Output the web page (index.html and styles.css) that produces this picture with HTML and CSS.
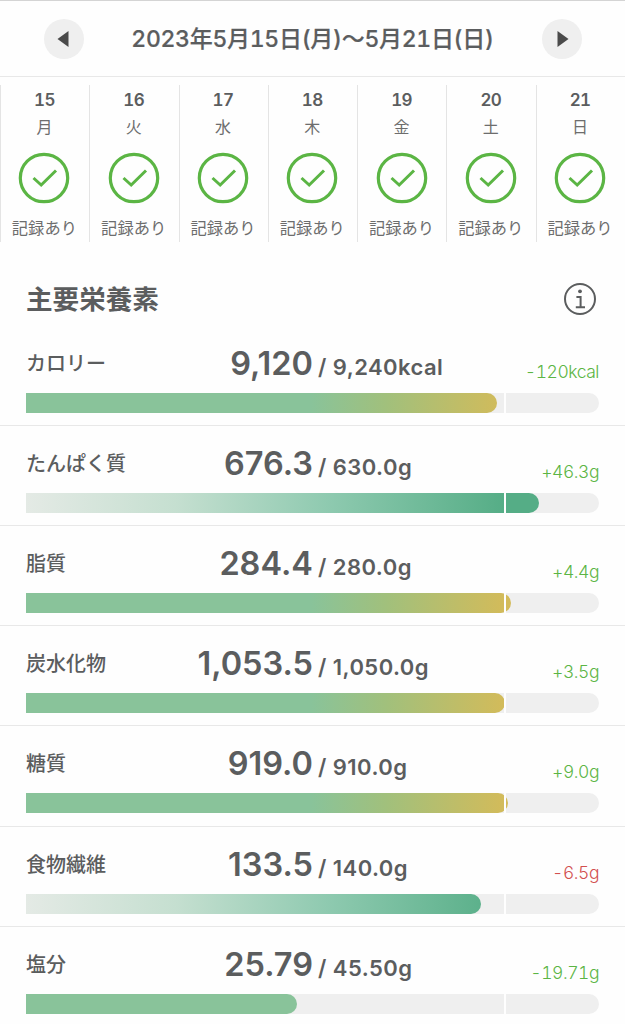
FILE: index.html
```
<!DOCTYPE html>
<html lang="ja">
<head>
    <title>主要栄養素</title>
    <meta charset="UTF-8">
    <link rel="stylesheet" href="styles.css">
</head>
<body>
    <svg width="0" height="0" class="defs">
        <symbol id="check" viewBox="0 0 52 52">
            <circle cx="26" cy="26" r="23.7" stroke-width="3.2"/>
            <path d="M15.5 26 L23.2 33 L38 18.5" stroke-width="3"/>
        </symbol>
    </svg>

    <div class="week-nav">
        <button class="nav-btn"><svg width="12" height="18" viewBox="0 0 12 18"><path d="M0.5 9 L11.5 1 V17 Z"/></svg></button>
        <h1>2023年5月15日(月)〜5月21日(日)</h1>
        <button class="nav-btn next"><svg width="12" height="18" viewBox="0 0 12 18"><path d="M11.5 9 L0.5 1 V17 Z"/></svg></button>
    </div>

    <div class="days">
        <div class="day"><b>15</b><span>月</span><svg class="check"><use href="#check"/></svg><small>記録あり</small></div>
        <div class="day"><b>16</b><span>火</span><svg class="check"><use href="#check"/></svg><small>記録あり</small></div>
        <div class="day"><b>17</b><span>水</span><svg class="check"><use href="#check"/></svg><small>記録あり</small></div>
        <div class="day"><b>18</b><span>木</span><svg class="check"><use href="#check"/></svg><small>記録あり</small></div>
        <div class="day"><b>19</b><span>金</span><svg class="check"><use href="#check"/></svg><small>記録あり</small></div>
        <div class="day"><b>20</b><span>土</span><svg class="check"><use href="#check"/></svg><small>記録あり</small></div>
        <div class="day"><b>21</b><span>日</span><svg class="check"><use href="#check"/></svg><small>記録あり</small></div>
    </div>

    <div class="section-header">
        <h2>主要栄養素</h2>
        <svg class="info" width="34" height="34" viewBox="0 0 34 34">
            <circle cx="17" cy="17" r="15" />
            <path d="M13.4 15 H17.6 V25.3 M12.8 25.3 H22" />
            <circle class="dot" cx="17" cy="9.3" r="1.9" />
        </svg>
    </div>

    <div class="nutrient">
        <div class="figures">
            <div class="name">カロリー</div>
            <div class="value">9,120</div>
            <div class="goal">/ 9,240kcal</div>
            <div class="diff">-120kcal</div>
        </div>
        <div class="track"><div class="fill limit" style="width: 471px"></div></div>
    </div>
    <div class="nutrient">
        <div class="figures">
            <div class="name">たんぱく質</div>
            <div class="value">676.3</div>
            <div class="goal">/ 630.0g</div>
            <div class="diff">+46.3g</div>
        </div>
        <div class="track"><div class="fill target" style="width: 512.5px"></div></div>
    </div>
    <div class="nutrient">
        <div class="figures">
            <div class="name">脂質</div>
            <div class="value">284.4</div>
            <div class="goal">/ 280.0g</div>
            <div class="diff">+4.4g</div>
        </div>
        <div class="track"><div class="fill limit" style="width: 485px"></div></div>
    </div>
    <div class="nutrient">
        <div class="figures">
            <div class="name">炭水化物</div>
            <div class="value">1,053.5</div>
            <div class="goal">/ 1,050.0g</div>
            <div class="diff">+3.5g</div>
        </div>
        <div class="track"><div class="fill limit" style="width: 479px"></div></div>
    </div>
    <div class="nutrient">
        <div class="figures">
            <div class="name">糖質</div>
            <div class="value">919.0</div>
            <div class="goal">/ 910.0g</div>
            <div class="diff">+9.0g</div>
        </div>
        <div class="track"><div class="fill limit" style="width: 482px"></div></div>
    </div>
    <div class="nutrient">
        <div class="figures">
            <div class="name">食物繊維</div>
            <div class="value">133.5</div>
            <div class="goal">/ 140.0g</div>
            <div class="diff short">-6.5g</div>
        </div>
        <div class="track"><div class="fill target" style="width: 455px"></div></div>
    </div>
    <div class="nutrient">
        <div class="figures">
            <div class="name">塩分</div>
            <div class="value">25.79</div>
            <div class="goal">/ 45.50g</div>
            <div class="diff">-19.71g</div>
        </div>
        <div class="track"><div class="fill limit" style="width: 270.5px"></div></div>
    </div>
</body>
</html>
```
FILE: styles.css
```
:root {
    --text: #5b5d5e;
    --line: #e8e8e8;
    --green: #5bb544;
    --red: #d2504f;
}

* {
    margin: 0;
    padding: 0;
    box-sizing: border-box;
}

body {
    background: #fefefe;
    color: var(--text);
    font-family: Inter, "Noto Sans CJK JP", sans-serif;
    height: 1024px;
    overflow: hidden;
}

.defs {
    display: block;
}

.week-nav {
    height: 77px;
    padding: 0 43.5px;
    border-top: 1px solid #d4d4d4;
    border-bottom: 1px solid var(--line);
    display: flex;
    justify-content: space-between;
    align-items: center;
}

.week-nav h1 {
    font-size: 23px;
    font-weight: 500;
    line-height: 30px;
    font-variant-numeric: tabular-nums;
    letter-spacing: -0.3px;
    white-space: nowrap;
    -webkit-text-stroke: 0.2px var(--text);
}

.nav-btn {
    width: 40px;
    height: 40px;
    border: none;
    border-radius: 50%;
    background: #efefef;
    display: flex;
    align-items: center;
    justify-content: center;
    padding-right: 2px;
}

.nav-btn.next {
    padding: 0 0 0 3px;
}

.nav-btn path {
    fill: #4a4a4a;
}

.days {
    margin-top: 8px;
    height: 157px;
    display: grid;
    grid-template-columns: repeat(7, 1fr);
}

.day {
    border-left: 1px solid #e4e4e4;
    padding-right: 1.5px;
    display: flex;
    flex-direction: column;
    align-items: center;
    white-space: nowrap;
}

.day b {
    font-size: 17px;
    font-weight: 600;
    line-height: 20px;
    margin-top: 5px;
    font-variant-numeric: tabular-nums;
    letter-spacing: -0.6px;
}

.day span {
    font-size: 16px;
    line-height: 20px;
    margin-top: 7px;
    color: #6d6d6d;
}

.day small {
    font-size: 16.3px;
    line-height: 20px;
    margin-top: 14px;
    color: #6d6d6d;
}

.check {
    width: 52px;
    height: 52px;
    margin-top: 15px;
    fill: none;
    stroke: var(--green);
}

.section-header {
    height: 83.6px;
    padding: 40px 28px 0 26px;
    display: flex;
    justify-content: space-between;
    align-items: flex-start;
}

.section-header h2 {
    font-size: 26.6px;
    font-weight: 700;
    line-height: 34px;
}

.info {
    fill: none;
    stroke: var(--text);
    stroke-width: 2;
}

.info .dot {
    fill: var(--text);
    stroke: none;
}

.nutrient {
    height: 100.2px;
    padding: 16px 26px 0;
    border-bottom: 1px solid var(--line);
}

.nutrient:last-child {
    border-bottom: none;
}

.figures {
    display: grid;
    grid-template-columns: 120px 167px 1fr auto;
    align-items: baseline;
    height: 51px;
    white-space: nowrap;
}

.name {
    font-size: 20px;
    font-weight: 500;
    line-height: 40px;
    align-self: start;
    padding-top: 2px;
}

.value {
    font-size: 32.5px;
    font-weight: 600;
    line-height: 44px;
    text-align: right;
}

.goal {
    font-size: 22px;
    font-weight: 600;
    letter-spacing: 0.45px;
    padding-left: 5px;
}

.diff {
    font-size: 17.5px;
    font-weight: 300;
    font-variant-numeric: tabular-nums;
    letter-spacing: -0.45px;
    color: var(--green);
    align-self: start;
    line-height: 24px;
    margin-top: 18px;
}

.diff.short {
    color: var(--red);
}

.track {
    position: relative;
    height: 20px;
    background: #efefef;
    border-radius: 0 10px 10px 0;
}

/* goal marker */
.track::after {
    content: "";
    position: absolute;
    left: 478px;
    top: 0;
    width: 2px;
    height: 20px;
    background: #fefefe;
}

.fill {
    height: 20px;
    border-radius: 0 10px 10px 0;
}

.fill.limit {
    background: linear-gradient(to right, #89c39a 285px, #a1c07c 360px, #d3bb5a 479px);
}

.fill.target {
    background: linear-gradient(to right, #e4eae5, #c5dfd0 150px, #8fcab0 300px, #55ad86 479px);
}
```
